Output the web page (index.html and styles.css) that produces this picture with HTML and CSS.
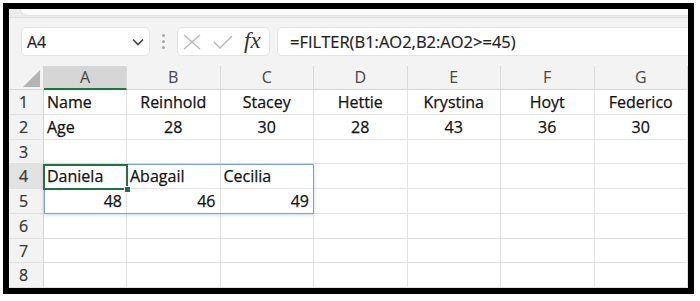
FILE: index.html
```html
<!DOCTYPE html>
<html>
<head>
<meta charset="utf-8">
<link rel="stylesheet" href="styles.css">
</head>
<body>
<div class="frame">
  <div class="ribbon-edge"><div class="ribbon-tab"></div></div>
  <div class="fbar">
    <div class="namebox">
      <span class="name-text">A4</span>
      <svg class="chev" width="12" height="8" viewBox="0 0 12 8"><path d="M1 1.5 L6 6.5 L11 1.5" fill="none" stroke="#444" stroke-width="1.6"/></svg>
    </div>
    <div class="dots"><span></span><span></span><span></span></div>
    <div class="fxbox">
      <svg width="18" height="16" viewBox="0 0 18 16"><path d="M1 1 L17 15 M17 1 L1 15" stroke="#b5b5b5" stroke-width="1.3" fill="none"/></svg>
      <svg width="20" height="14" viewBox="0 0 20 14"><path d="M1 7 L7 13 L19 1" stroke="#b5b5b5" stroke-width="1.3" fill="none"/></svg>
      <span class="fx">fx</span>
    </div>
    <div class="formula">=FILTER(B1:AO2,B2:AO2&gt;=45)</div>
  </div>
  <div class="grid">
    <div class="corner"><span class="tri"></span></div>
    <div class="ch sel">A</div><div class="ch">B</div><div class="ch">C</div><div class="ch">D</div><div class="ch">E</div><div class="ch">F</div><div class="ch">G</div>

    <div class="rh">1</div><div class="c">Name</div><div class="c ctr">Reinhold</div><div class="c ctr">Stacey</div><div class="c ctr">Hettie</div><div class="c ctr">Krystina</div><div class="c ctr">Hoyt</div><div class="c ctr">Federico</div>

    <div class="rh">2</div><div class="c">Age</div><div class="c ctr">28</div><div class="c ctr">30</div><div class="c ctr">28</div><div class="c ctr">43</div><div class="c ctr">36</div><div class="c ctr">30</div>

    <div class="rh">3</div><div class="c"></div><div class="c"></div><div class="c"></div><div class="c"></div><div class="c"></div><div class="c"></div><div class="c"></div>

    <div class="rh rsel">4</div><div class="c">Daniela</div><div class="c">Abagail</div><div class="c">Cecilia</div><div class="c"></div><div class="c"></div><div class="c"></div><div class="c"></div>

    <div class="rh">5</div><div class="c rt">48</div><div class="c rt">46</div><div class="c rt">49</div><div class="c"></div><div class="c"></div><div class="c"></div><div class="c"></div>

    <div class="rh">6</div><div class="c"></div><div class="c"></div><div class="c"></div><div class="c"></div><div class="c"></div><div class="c"></div><div class="c"></div>

    <div class="rh">7</div><div class="c"></div><div class="c"></div><div class="c"></div><div class="c"></div><div class="c"></div><div class="c"></div><div class="c"></div>

    <div class="rh">8</div><div class="c"></div><div class="c"></div><div class="c"></div><div class="c"></div><div class="c"></div><div class="c"></div><div class="c"></div>

    <div class="spill"></div>
    <div class="active"><span class="handle"></span></div>
  </div>
</div>
</body>
</html>
```

FILE: styles.css
```css
* { box-sizing: border-box; }
html, body { margin: 0; padding: 0; background: #fff; }
body { font-family: "Open Sans", "Noto Sans", sans-serif; }

.frame {
  margin: 3px 0 0 3px;
  width: 691px;
  height: 291px;
  border: 6px solid #000;
  background: #f3f3f3;
  overflow: hidden;
  display: flex;
  flex-direction: column;
}

.ribbon-edge {
  height: 9px;
  background: #ececec;
  border-bottom: 1px solid #dedede;
  padding-left: 11px;
  flex: none;
}
.ribbon-tab {
  height: 7px;
  background: #fafafa;
  border-radius: 0 0 0 10px;
  border: 1px solid #e2e2e2;
  border-top: none;
  border-right: none;
}

.fbar {
  height: 48px;
  flex: none;
  display: flex;
  align-items: flex-start;
  padding: 9px 0 0 12px;
}
.namebox {
  width: 129px;
  height: 29px;
  background: #fff;
  border: 1px solid #e3e3e3;
  border-radius: 5px;
  display: flex;
  align-items: center;
  justify-content: space-between;
  padding: 0 5px 0 5px;
}
.name-text { font-size: 16px; color: #222; -webkit-text-stroke: 0.2px #222; }
.chev { margin-top: 1px; }
.dots {
  width: 27px;
  height: 29px;
  display: flex;
  flex-direction: column;
  align-items: center;
  justify-content: center;
  gap: 3px;
}
.dots span { width: 3px; height: 3px; border-radius: 50%; background: #a8a8a8; }
.fxbox {
  width: 93px;
  height: 29px;
  background: #fff;
  border: 1px solid #e3e3e3;
  border-radius: 5px;
  display: flex;
  align-items: center;
  padding-left: 5px;
  gap: 12px;
}
.fx {
  font-family: "Liberation Serif", "DejaVu Serif", serif;
  font-style: italic;
  font-size: 23px;
  color: #333;
  margin-left: -1px;
  line-height: 1;
  margin-top: -3px;
}
.formula {
  flex: 1;
  height: 29px;
  margin-left: 7px;
  margin-right: -8px;
  background: #fff;
  border: 1px solid #e3e3e3;
  border-radius: 5px;
  font-size: 16.5px;
  color: #222;
  -webkit-text-stroke: 0.2px #222;
  padding-left: 12px;
  line-height: 27px;
}

.grid {
  position: relative;
  flex: none;
  display: grid;
  grid-template-columns: 35px 83px repeat(6, 93.5px);
  grid-template-rows: 24px repeat(8, 24.75px);
  background: #fff;
  font-size: 16px;
  color: #111;
}
.corner {
  background: #f3f3f3;
  border-right: 1px solid #d6d6d6;
  border-bottom: 1px solid #d6d6d6;
  position: relative;
}
.tri {
  position: absolute;
  right: 3px;
  bottom: 2px;
  width: 0;
  height: 0;
  border-left: 17px solid transparent;
  border-bottom: 17px solid #b4b4b4;
}
.ch {
  background: #f3f3f3;
  border-right: 1px solid #dadada;
  border-bottom: 1px solid #d6d6d6;
  text-align: center;
  color: #444;
  line-height: 23px;
}
.ch.sel {
  background: #d6d6d6;
  border-bottom: 2px solid #107c41;
}
.rh {
  background: #f3f3f3;
  border-right: 1px solid #d6d6d6;
  border-bottom: 1px solid #e0e0e0;
  padding-left: 10px;
  color: #333;
  line-height: 24px;
  -webkit-text-stroke: 0.2px #333;
}
.rh.rsel { background: #e2e2e2; }
.c {
  border-right: 1px solid #e3e3e3;
  border-bottom: 1px solid #e3e3e3;
  padding: 0 3px;
  line-height: 25px;
  white-space: nowrap;
  overflow: hidden;
  -webkit-text-stroke: 0.25px #111;
}
.c.ctr { text-align: center; }
.c.rt { text-align: right; padding-right: 4px; }

.spill {
  position: absolute;
  left: 35px;
  top: 98.25px;
  width: 270px;
  height: 50px;
  border: 1px solid #7d9fd3;
  box-shadow: 0 1px 4px rgba(60, 90, 140, 0.25);
  pointer-events: none;
}
.active {
  position: absolute;
  left: 34px;
  top: 97.5px;
  width: 85px;
  height: 26.5px;
  border: 2px solid #217346;
  pointer-events: none;
}
.handle {
  position: absolute;
  right: -5px;
  bottom: -5px;
  width: 7px;
  height: 7px;
  background: #217346;
  border: 1px solid #fff;
}
```
